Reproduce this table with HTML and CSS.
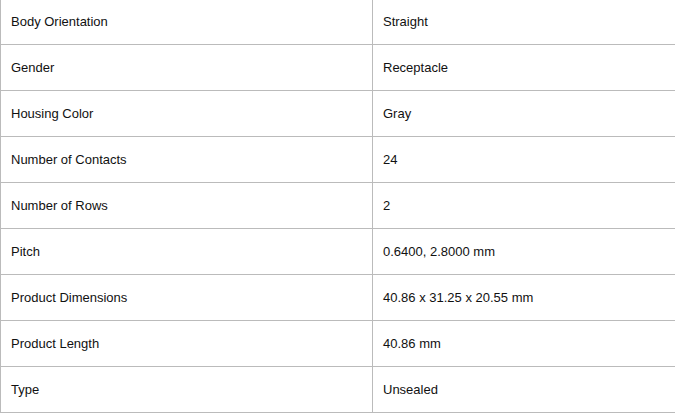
FILE: index.html
```html
<!DOCTYPE html>
<html>
<head>
<meta charset="utf-8">
<link rel="stylesheet" href="styles.css">
</head>
<body>
<table class="specs">
  <tr><td class="label">Body Orientation</td><td class="value">Straight</td></tr>
  <tr><td class="label">Gender</td><td class="value">Receptacle</td></tr>
  <tr><td class="label">Housing Color</td><td class="value">Gray</td></tr>
  <tr><td class="label">Number of Contacts</td><td class="value">24</td></tr>
  <tr><td class="label">Number of Rows</td><td class="value">2</td></tr>
  <tr><td class="label">Pitch</td><td class="value">0.6400, 2.8000 mm</td></tr>
  <tr><td class="label">Product Dimensions</td><td class="value">40.86 x 31.25 x 20.55 mm</td></tr>
  <tr><td class="label">Product Length</td><td class="value">40.86 mm</td></tr>
  <tr><td class="label">Type</td><td class="value">Unsealed</td></tr>
</table>
</body>
</html>
```
FILE: styles.css
```css
html, body {
  margin: 0;
  padding: 0;
  overflow: hidden;
  background: #fff;
}
.specs {
  border-collapse: collapse;
  width: 690px;
  margin-top: -2px;
  font-family: Arial, "Liberation Sans", sans-serif;
  font-size: 13px;
  color: #111;
}
.specs td {
  border: 1px solid #bbbbbb;
  height: 46px;
  padding: 0 10px;
  box-sizing: border-box;
  vertical-align: middle;
}
.specs .label {
  width: 372px;
}
```
